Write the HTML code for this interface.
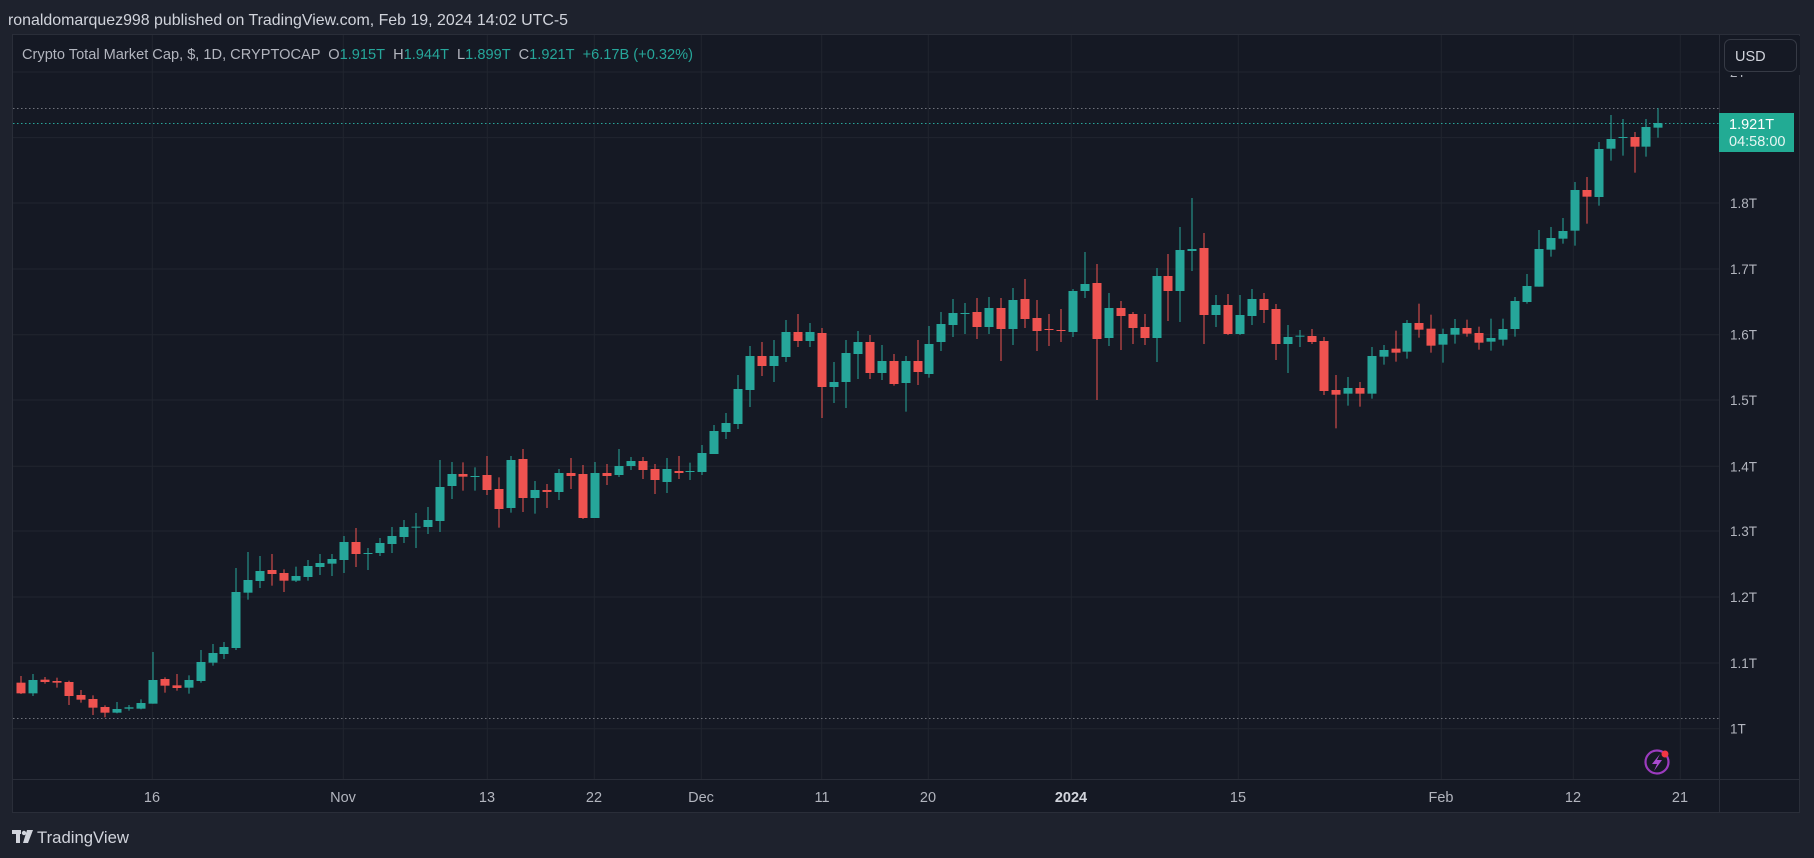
<!DOCTYPE html>
<html><head><meta charset="utf-8"><style>
html,body{margin:0;padding:0;background:#1e222d;width:1814px;height:858px;overflow:hidden}
svg{display:block}
text{font-family:"Liberation Sans",sans-serif}
</style></head><body>
<svg id="s" width="1814" height="858" xmlns="http://www.w3.org/2000/svg">
<rect width="1814" height="858" fill="#1e222d"/>
<text x="8" y="25" font-size="15.9" fill="#d1d4dc" textLength="560" lengthAdjust="spacingAndGlyphs">ronaldomarquez998 published on TradingView.com, Feb 19, 2024 14:02 UTC-5</text>
<rect x="12.5" y="34.5" width="1787" height="778" fill="#151924" stroke="#2a2e39"/>
<g id="grid" stroke="#21252f" stroke-width="1"></g>
<line x1="1719.5" y1="34" x2="1719.5" y2="813" stroke="#2a2e39"/>
<line x1="12" y1="779.5" x2="1800" y2="779.5" stroke="#2a2e39"/>
<line x1="13" y1="108.5" x2="1719" y2="108.5" stroke="#9598a1" stroke-dasharray="1.5 2.5" opacity="0.7"/>
<line x1="13" y1="718.5" x2="1719" y2="718.5" stroke="#9598a1" stroke-dasharray="1.5 2.5" opacity="0.7"/>
<line x1="13" y1="123.5" x2="1719" y2="123.5" stroke="#26a69a" stroke-dasharray="1.5 2.5"/>
<g id="c"></g>
<text x="22" y="59" font-size="14.6" fill="#b2b5be">Crypto Total Market Cap, $, 1D, CRYPTOCAP <tspan dx="4">O</tspan><tspan fill="#26a69a">1.915T</tspan><tspan dx="8">H</tspan><tspan fill="#26a69a">1.944T</tspan><tspan dx="8">L</tspan><tspan fill="#26a69a">1.899T</tspan><tspan dx="8">C</tspan><tspan fill="#26a69a">1.921T</tspan><tspan dx="8" fill="#26a69a">+6.17B (+0.32%)</tspan></text>
<g font-size="13.5" fill="#b2b5be" id="pl"></g>
<rect x="1722" y="36" width="78" height="39" fill="#151924"/>
<rect x="1724.5" y="39.5" width="72" height="32" rx="6" fill="#151924" stroke="#363a45"/>
<text x="1735" y="61" font-size="14.5" fill="#d1d4dc">USD</text>
<rect x="1719" y="113" width="75" height="39" fill="#22ab94"/>
<text x="1729" y="129" font-size="14.5" fill="#fff">1.921T</text>
<text x="1729" y="146" font-size="14.5" fill="#e6f5f2">04:58:00</text>
<g font-size="14.5" fill="#b2b5be" text-anchor="middle">
<text x="152" y="802">16</text><text x="343" y="802">Nov</text><text x="487" y="802">13</text><text x="594" y="802">22</text><text x="701" y="802">Dec</text><text x="822" y="802">11</text><text x="928" y="802">20</text><text x="1071" y="802" font-weight="bold" fill="#d1d4dc">2024</text><text x="1238" y="802">15</text><text x="1441" y="802">Feb</text><text x="1573" y="802">12</text><text x="1680" y="802">21</text>
</g>
<circle cx="1657" cy="762" r="11.5" fill="none" stroke="#9c3bbf" stroke-width="2.2"/>
<path d="M1660 754 L1652 764 L1657 764 L1654 771 L1662 760 L1657 760 Z" fill="#a94bd0"/>
<circle cx="1665" cy="754" r="3.5" fill="#f23645"/>
<g fill="#d1d4dc"><rect x="12" y="830" width="9" height="4"/><rect x="16" y="830" width="4" height="13"/><circle cx="24" cy="833" r="2.2"/><path d="M27 830 L33 830 L28 843 L23 843 Z"/></g>
<text x="37" y="843" font-size="16.5" fill="#d1d4dc" textLength="92" lengthAdjust="spacingAndGlyphs">TradingView</text>
</svg>
<script>
var NS="http://www.w3.org/2000/svg";
function el(p,t,a){var e=document.createElementNS(NS,t);for(var k in a)e.setAttribute(k,a[k]);p.appendChild(e);return e;}
var g=document.getElementById('grid');
[72,137.6,203,269,334.7,400,466.3,531,597,663,728.7].forEach(function(y){el(g,'line',{x1:13,x2:1719,y1:y,y2:y});});
[152.3,343.3,487.3,594.3,701.3,821.7,928.3,1071.3,1238.3,1441.3,1573.3,1680.3].forEach(function(x){el(g,'line',{x1:x,x2:x,y1:35,y2:779});});
var pl=document.getElementById('pl');
[["2T",72],["1.8T",203],["1.7T",269],["1.6T",334.7],["1.5T",400],["1.4T",466.3],["1.3T",531],["1.2T",597],["1.1T",663],["1T",728.7]].forEach(function(p){var t=el(pl,'text',{x:1730,y:p[1]+5});t.textContent=p[0];});
var segs=[
[440,"r 728 760 708 762|g 720 760 702 768|r 719 726 711 731|r 723 728 713 743|r 726 768 722 795|r 765 779 750 788|r 777 803 766 825|r 801 818 796 832|g 807 818 786 820|g 802 806 795 812|g 789 806 778 808|g 720 791 636 791|r 717 737 712 758|r 736 744 702 752|g 720 743 706 761|g 666 723 630 728|g 639 668 612 677|g 621 642 606 657|g 456 624 384 630|g 420 458 336 479|g 393 423 348 444|r 390 402 342 437|r 399 422 388 456|g 408 422 380 426|g 378 411 360 422|g 369 381 342 405|g 357 371 342 408|g 306 360 288 399|r 306 342 264 381|g 339 342 324 390|g 309 339 294 348|g 288 312 261 339|g 261 291 240 309|g 260 263 219 324|g 240 261 201 282|g 141 243 60 276|g 102 138 66 177"],
[280,"r 582 590 547 632|g 588 590 562 632|r 585 630 528 645|r 627 687 592 743|g 540 684 528 698|r 537 654 507 696|g 630 654 603 701|r 630 636 612 684|g 579 636 567 660|r 579 588 534 627|r 582 714 555 717|g 579 714 546 714|r 579 588 552 615|g 558 585 507 591|g 543 558 531 570|r 543 570 531 597|r 567 600 552 642|g 567 606 534 639|r 573 579 528 597|g 573 576 548 600|g 519 576 495 585|g 453 522 435 522|g 429 456 399 477|g 327 432 285 447|g 228 330 198 381|r 228 258 186 288|g 228 258 180 306|g 156 231 120 246|r 156 183 102 201|g 156 183 129 201|r 159 321 144 414|g 306 321 246 369|g 219 306 180 384|g 186 222 153 297|r 186 279 165 297|g 243 279 195 300"],
[190,"r 513 582 492 587|g 513 579 498 665|r 513 546 450 585|g 462 552 408 563|g 402 456 366 483|g 369 405 327 441|g 369 372 339 432|r 366 411 324 447|g 354 411 321 432|r 354 417 324 513|g 330 417 294 465|r 327 387 267 414|r 384 423 330 483|r 417 420 372 468|r 420 423 357 456|g 303 426 297 441|g 282 303 186 324|r 279 447 222 630|g 354 444 309 468|r 354 378 333 480|r 372 414 366 462|r 411 444 372 465|g 258 444 234 516|r 258 303 192 393|g 180 303 111 396|g 177 183 24 243|r 174 375 129 462|g 345 375 315 411|r 345 432 312 435|g 375 432 315 435|g 327 378 297 405|r 327 360 309 399|r 357 462 342 510|g 441 462 405 549|g 437 440 420 471|r 438 456 417 462|r 453 603 441 615"],
[100,"r 870 884 825 985|g 864 881 831 917|r 864 881 846 920|g 768 881 741 896|g 750 770 735 794|r 746 758 692 785|g 669 755 660 776|r 669 689 611 713|r 686 737 644 758|g 702 734 686 788|g 684 704 657 731|r 684 701 659 710|r 699 728 680 749|g 714 725 656 752|g 687 719 656 737|g 603 687 591 710|g 558 606 522 611|g 447 560 390 560|g 414 449 381 470|g 393 416 354 431|g 270 392 246 437|r 270 290 231 371|g 147 291 126 317|g 117 146 45 182|g 111 113 57 167|r 111 140 96 218|g 81 140 57 170|g 69 83 24 113"]
];
var c=document.getElementById('c'),i=0;
segs.forEach(function(s){var oy=s[0];s[1].split('|').forEach(function(d){var p=d.split(' ');var col=p[0]=='g'?'#26a69a':'#ef5350';
var bt=oy+p[1]/3,bb=oy+p[2]/3,wt=oy+p[3]/3,wb=oy+p[4]/3;var x=Math.round(21.3+i*11.95);
el(c,'rect',{x:x-0.5,y:wt,width:1,height:Math.max(wb-wt,1),fill:col});
el(c,'rect',{x:x-4.5,y:bt,width:9,height:Math.max(bb-bt,1),fill:col});i++;});});
</script>
</body></html>
